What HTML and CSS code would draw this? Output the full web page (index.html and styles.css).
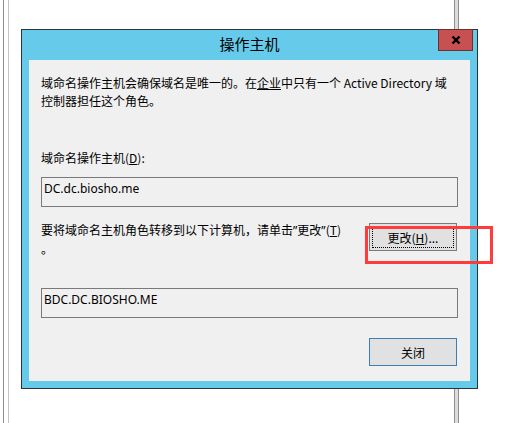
FILE: index.html
```html
<!DOCTYPE html>
<html lang="zh-CN">
<head>
  <meta charset="UTF-8" />
  <meta name="viewport" content="width=device-width, initial-scale=1" />
  <title>操作主机</title>
  <link rel="stylesheet" href="styles.css">
</head>
<body>
  <div class="dialog">
    <div class="titlebar">
      <span class="title">操作主机</span>
      <div class="close-x" aria-label="关闭">
        <svg viewBox="0 0 10 10" width="10" height="10"><path d="M1.5 1.5 8.5 8.5M8.5 1.5 1.5 8.5" stroke="#000" stroke-width="2.4" /></svg>
      </div>
    </div>

    <div class="client">
      <p class="intro">域命名操作主机会确保域名是唯一的。在<u>企业</u>中只有一个 Active Directory 域<br>控制器担任这个角色。</p>

      <span class="label">域命名操作主机(<u>D</u>):</span>
      <div class="field">DC.dc.biosho.me</div>

      <div class="transfer">
        <p class="transfer-text">要将域命名主机角色转移到以下计算机，请单击<span class="q">”</span>更改<span class="q">”</span>(<u>T</u>)<br>。</p>
        <button class="btn btn-change">更改(<u>H</u>)...</button>
      </div>

      <div class="field field-target">BDC.DC.BIOSHO.ME</div>

      <div class="actions">
        <button class="btn btn-close">关闭</button>
      </div>
    </div>
  </div>

  <!-- 红框标注 -->
  <div class="highlight"></div>
</body>
</html>
```

FILE: styles.css
```css
* {
  box-sizing: border-box;
}

body {
  margin: 0;
  position: relative;
  height: 423px;
  overflow: hidden;
  padding: 29px 0 0 21px;
  font-family: "Noto Sans CJK SC", "Noto Sans", sans-serif;
  font-size: 12px;
  color: #000;
  background:
    linear-gradient(to right, transparent 454px, #8e8e8e 454px, #8e8e8e 455px, #dcdcdc 455px, #dcdcdc 458px, #8e8e8e 458px, #8e8e8e 459px, transparent 459px),
    linear-gradient(to right, #fff 3px, #8e8e8e 3px, #8e8e8e 4px, #fff 4px, #fff 8px, #c6c6c6 8px, #c6c6c6 9px, #fff 9px);
}

/* Ventana */
.dialog {
  position: relative;
  width: 457px;
  height: 360px;
  border: 1px solid #2e3436;
  background: #66cbea;
  padding: 0 7px 7px;
  display: flex;
  flex-direction: column;
}

.titlebar {
  position: relative;
  height: 30px;
  margin: 0 -7px;
  display: flex;
  align-items: center;
  justify-content: center;
}

.title {
  font-size: 15px;
  line-height: 20px;
  margin-top: -2px;
}

.close-x {
  position: absolute;
  top: -1px;
  right: 4px;
  width: 35px;
  height: 22px;
  background: #c75050;
  border: 1px solid #6e2f2f;
  display: flex;
  align-items: center;
  justify-content: center;
}

.close-x svg {
  display: block;
}

/* Area de contenido */
.client {
  flex: 1;
  background: #f0f0f0;
  padding: 14px 12px 0;
  display: flex;
  flex-direction: column;
}

.intro {
  margin: 0;
  line-height: 18px;
}

.label {
  display: block;
  margin-top: 39px;
  line-height: 18px;
}

.field {
  margin-top: 10px;
  height: 30px;
  border: 1px solid #7a7a7a;
  padding: 2px 2px 0;
  line-height: 18px;
  font-family: "Noto Sans", "Noto Sans CJK SC", sans-serif;
}

.transfer {
  margin-top: 14px;
  display: flex;
  align-items: flex-start;
}

.transfer-text {
  margin: 0;
  flex: 1;
  line-height: 18px;
  white-space: nowrap;
}

.q {
  font-family: "Noto Sans", sans-serif;
}

.btn {
  font-family: inherit;
  font-size: 12px;
  color: #000;
  width: 88px;
  height: 28px;
  padding: 0;
  background: #e1e1e1;
  border: 1px solid #adadad;
  border-radius: 0;
}

.btn-change {
  position: relative;
  margin-top: 2px;
  margin-right: 1px;
  border-color: #7a7a7a;
}

.btn-change::after {
  content: "";
  position: absolute;
  inset: 2px;
  border: 1px dotted #000;
}

.field-target {
  margin-top: 30px;
}

.actions {
  margin-top: 20px;
  display: flex;
  justify-content: flex-end;
  padding-right: 1px;
}

.btn-close {
  border-color: #3c7fb1;
}

/* Marca roja */
.highlight {
  position: absolute;
  left: 365px;
  top: 226px;
  width: 128px;
  height: 38px;
  border: 3px solid #ff3b3b;
}
```
